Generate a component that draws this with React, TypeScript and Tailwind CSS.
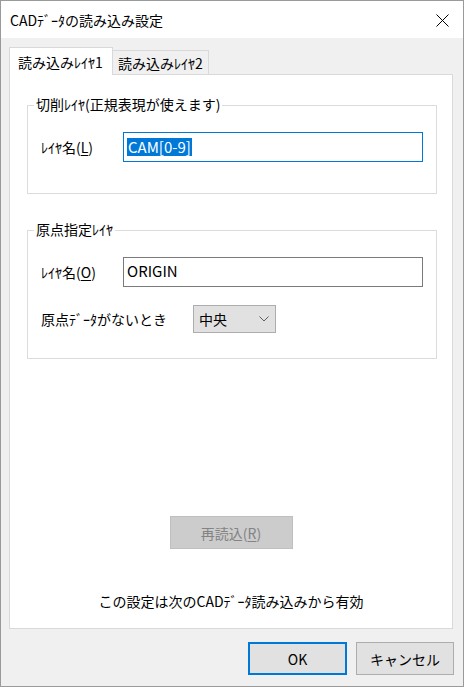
import { useState } from "react";

const Mnemonic = ({ text, letter }: { text: string; letter: string }) => (
  <span>
    {text}(<span className="underline underline-offset-2">{letter}</span>)
  </span>
);

const GroupBox = ({
  title,
  className,
  children,
}: {
  title: string;
  className?: string;
  children: React.ReactNode;
}) => (
  <div className={`relative ml-[17px] w-[410px] border border-[#dcdcdc] ${className ?? ""}`}>
    {/* legend sits over the top border */}
    <span className="absolute -top-[12px] left-[6px] bg-white px-[2px] leading-[20px]">{title}</span>
    {children}
  </div>
);

const App = () => {
  const [origin, setOrigin] = useState<string>("ORIGIN");

  return (
    <div className="flex h-[687px] w-[464px] flex-col border border-[#9a9a9a] bg-[#f0f0f0] font-['Noto_Sans_CJK_JP',sans-serif] text-[14px] text-black">
      {/* title bar */}
      <div className="flex h-[37px] items-center justify-between bg-white pl-[9px] pr-[14px]">
        <span className="leading-[20px]">CADﾃﾞｰﾀの読み込み設定</span>
        <svg width="13" height="13" viewBox="0 0 13 13" className="mt-[1px]">
          <path d="M0.5 0.5 L12.5 12.5 M12.5 0.5 L0.5 12.5" stroke="#000" strokeWidth="1" />
        </svg>
      </div>

      <div className="flex flex-1 flex-col">
        {/* tabs */}
        <div className="ml-[8px] mt-[9px] flex h-[27px] items-end">
          <div className="relative z-10 -mb-px flex h-[28px] w-[104px] items-center border border-b-0 border-[#d9d9d9] bg-white pl-[8px] leading-[20px]">
            読み込みﾚｲﾔ1
          </div>
          <div className="flex h-[24px] w-[96px] items-center border border-b-0 border-l-0 border-[#d9d9d9] bg-[#f0f0f0] pl-[5px] pt-[1px] leading-[20px]">
            読み込みﾚｲﾔ2
          </div>
        </div>

        {/* tab page */}
        <div className="ml-[8px] flex h-[555px] w-[444px] flex-col border border-[#d9d9d9] bg-white">
          <GroupBox title="切削ﾚｲﾔ(正規表現が使えます)" className="mt-[30px] h-[89px] pt-[26px]">
            <div className="flex items-center">
              <div className="w-[95px] pl-[13px] leading-[20px]">
                <Mnemonic text="ﾚｲﾔ名" letter="L" />
              </div>
              <div className="flex h-[30px] w-[300px] items-center border border-[#0078d7] pl-[3px]">
                <span className="bg-[#0078d7] px-[1px] text-[15px] leading-[18px] text-white">CAM[0-9]</span>
              </div>
            </div>
          </GroupBox>

          <GroupBox title="原点指定ﾚｲﾔ" className="mt-[36px] h-[129px] pt-[26px]">
            <div className="flex items-center">
              <div className="w-[95px] pl-[13px] leading-[20px]">
                <Mnemonic text="ﾚｲﾔ名" letter="O" />
              </div>
              <input
                value={origin}
                onChange={(e) => setOrigin(e.target.value)}
                className="h-[30px] w-[300px] border border-[#7a7a7a] bg-white pl-[3px] pb-[3px] text-[15px] outline-none"
              />
            </div>
            <div className="mt-[18px] flex items-center">
              <div className="w-[165px] pl-[13px] leading-[20px]">原点ﾃﾞｰﾀがないとき</div>
              <div className="flex h-[28px] w-[83px] items-center justify-between border border-[#adadad] bg-[#e1e1e1] pl-[5px] pr-[6px] leading-[20px]">
                <span>中央</span>
                <svg width="10" height="6" viewBox="0 0 10 6">
                  <path d="M0.5 0.5 L5 5 L9.5 0.5" fill="none" stroke="#606060" strokeWidth="1" />
                </svg>
              </div>
            </div>
          </GroupBox>

          <button
            disabled
            className="mx-auto mt-[157px] flex h-[33px] w-[123px] items-center justify-center border border-[#bfbfbf] bg-[#cccccc] leading-[20px] text-[#838383]"
          >
            <Mnemonic text="再読込" letter="R" />
          </button>

          <p className="mt-[42px] text-center leading-[20px]">この設定は次のCADﾃﾞｰﾀ読み込みから有効</p>
        </div>

        {/* dialog buttons */}
        <div className="flex justify-end gap-[9px] pr-[9px] pt-[13px]">
          <button className="flex h-[33px] w-[99px] items-center justify-center border-2 border-[#0078d7] bg-[#e1e1e1] leading-[20px]">
            OK
          </button>
          <button className="flex h-[33px] w-[98px] items-center justify-center border border-[#adadad] bg-[#e1e1e1] leading-[20px]">
            キャンセル
          </button>
        </div>
      </div>
    </div>
  );
};

export default App;
